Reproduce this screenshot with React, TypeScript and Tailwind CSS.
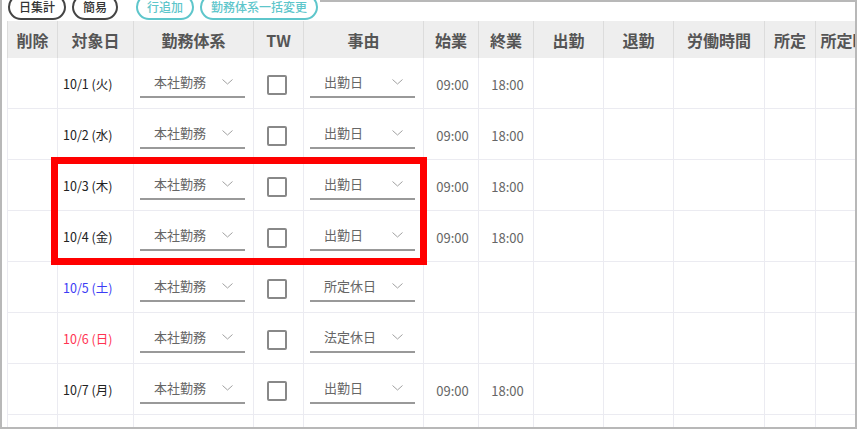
import React from "react"

const font = { fontFamily: '"Noto Sans CJK JP", "Noto Sans", sans-serif' }

const cols = [
    { label: "削除", w: "w-[50px]" },
    { label: "対象日", w: "w-[76px]" },
    { label: "勤務体系", w: "w-[120px]" },
    { label: "TW", w: "w-[50px]" },
    { label: "事由", w: "w-[120px]" },
    { label: "始業", w: "w-[55px]" },
    { label: "終業", w: "w-[55px]" },
    { label: "出勤", w: "w-[70px]" },
    { label: "退勤", w: "w-[70px]" },
    { label: "労働時間", w: "w-[91px]" },
    { label: "所定", w: "w-[51px]" },
    { label: "所定時間外", w: "w-[90px]" },
]

const rows = [
    { date: "10/1 (火)", color: "text-[#222]", reason: "出勤日", work: true },
    { date: "10/2 (水)", color: "text-[#222]", reason: "出勤日", work: true },
    { date: "10/3 (木)", color: "text-[#222]", reason: "出勤日", work: true },
    { date: "10/4 (金)", color: "text-[#222]", reason: "出勤日", work: true },
    { date: "10/5 (土)", color: "text-[#3c3cf5]", reason: "所定休日", work: false },
    { date: "10/6 (日)", color: "text-[#ff3352]", reason: "法定休日", work: false },
    { date: "10/7 (月)", color: "text-[#222]", reason: "出勤日", work: true },
    { date: "", color: "text-[#222]", reason: "", work: false },
]

const Chevron = () => (
    <svg width="11" height="6" viewBox="0 0 11 6" fill="none">
        <polyline points="0.5,0.5 5.5,5 10.5,0.5" stroke="#a0a0a0" strokeWidth="1" />
    </svg>
)

const Select = ({ value }: { value: string }) => (
    <div className="ml-[6px] flex h-[30px] w-[105px] items-center border-b-2 border-[#999] pl-[14px] pr-[12px]">
        <span className="flex-1 text-[13px] text-[#666]">{value}</span>
        <Chevron />
    </div>
)

const Pill = ({ label, teal }: { label: string; teal?: boolean }) => (
    <button
        className={
            teal
                ? "relative z-10 -mt-[6px] h-[26px] rounded-full border-2 border-[#5ec6cb] bg-white px-[9px] text-[12px] font-medium leading-none text-[#5ec6cb]"
                : "relative z-10 -mt-[6px] h-[26px] rounded-full border-2 border-[#444] bg-white px-[9px] text-[12px] font-medium leading-none text-[#333]"
        }
    >
        {label}
    </button>
)

export default function App() {
    return (
        <div style={font} className="relative h-[429px] w-[857px] overflow-hidden border-x-2 border-b-2 border-[#b8b8b8] bg-white">
            <div className="flex h-[21px] items-start pl-[6px]">
                <div className="flex gap-[6px]">
                    <Pill label="日集計" />
                    <Pill label="簡易" />
                </div>
                <div className="ml-[18px] flex gap-[6px]">
                    <Pill label="行追加" teal />
                    <Pill label="勤務体系一括変更" teal />
                </div>
                <div className="ml-[2px] flex-1 self-start border-t-2 border-[#b8b8b8]" />
            </div>

            <div className="ml-[5px] w-[900px]">
                <div className="flex h-[37px] bg-[#eeeeee]">
                    {cols.map((c, i) => (
                        <div
                            key={i}
                            className={`${c.w} flex shrink-0 items-center justify-center overflow-hidden whitespace-nowrap border-l border-[#dcdcdc] text-[16px] font-bold text-[#555]`}
                        >
                            {c.label}
                        </div>
                    ))}
                </div>

                {rows.map((r, ri) => (
                    <div key={ri} className="flex h-[51px] border-b border-[#ebebf1]">
                        <div className="w-[50px] shrink-0 border-l border-[#ebebf1]" />
                        <div className="flex w-[76px] shrink-0 items-center border-l border-[#ebebf1] pl-[5px] pt-[3px]">
                            <span className={`text-[12.5px] ${r.color}`}>{r.date}</span>
                        </div>
                        <div className="flex w-[120px] shrink-0 items-center border-l border-[#ebebf1]">
                            {r.date && <Select value="本社勤務" />}
                        </div>
                        <div className="flex w-[50px] shrink-0 items-center justify-center border-l border-[#ebebf1] pr-[3px] pt-[3px]">
                            {r.date && <div className="h-[20px] w-[20px] rounded-[2px] border-2 border-[#888]" />}
                        </div>
                        <div className="flex w-[120px] shrink-0 items-center border-l border-[#ebebf1]">
                            {r.date && <Select value={r.reason} />}
                        </div>
                        <div className="flex w-[55px] shrink-0 items-center justify-center border-l border-[#ebebf1] pl-[3px] pt-[3px] text-[13px] text-[#666]">
                            {r.work && "09:00"}
                        </div>
                        <div className="flex w-[55px] shrink-0 items-center justify-center border-l border-[#ebebf1] pl-[3px] pt-[3px] text-[13px] text-[#666]">
                            {r.work && "18:00"}
                        </div>
                        <div className="w-[70px] shrink-0 border-l border-[#ebebf1]" />
                        <div className="w-[70px] shrink-0 border-l border-[#ebebf1]" />
                        <div className="w-[91px] shrink-0 border-l border-[#ebebf1]" />
                        <div className="w-[51px] shrink-0 border-l border-[#ebebf1]" />
                        <div className="w-[90px] shrink-0 border-l border-[#ebebf1]" />
                    </div>
                ))}
            </div>

            <div className="absolute left-[49px] top-[157px] h-[108px] w-[376px] border-[7px] border-[#ff0000]" />
        </div>
    )
}
